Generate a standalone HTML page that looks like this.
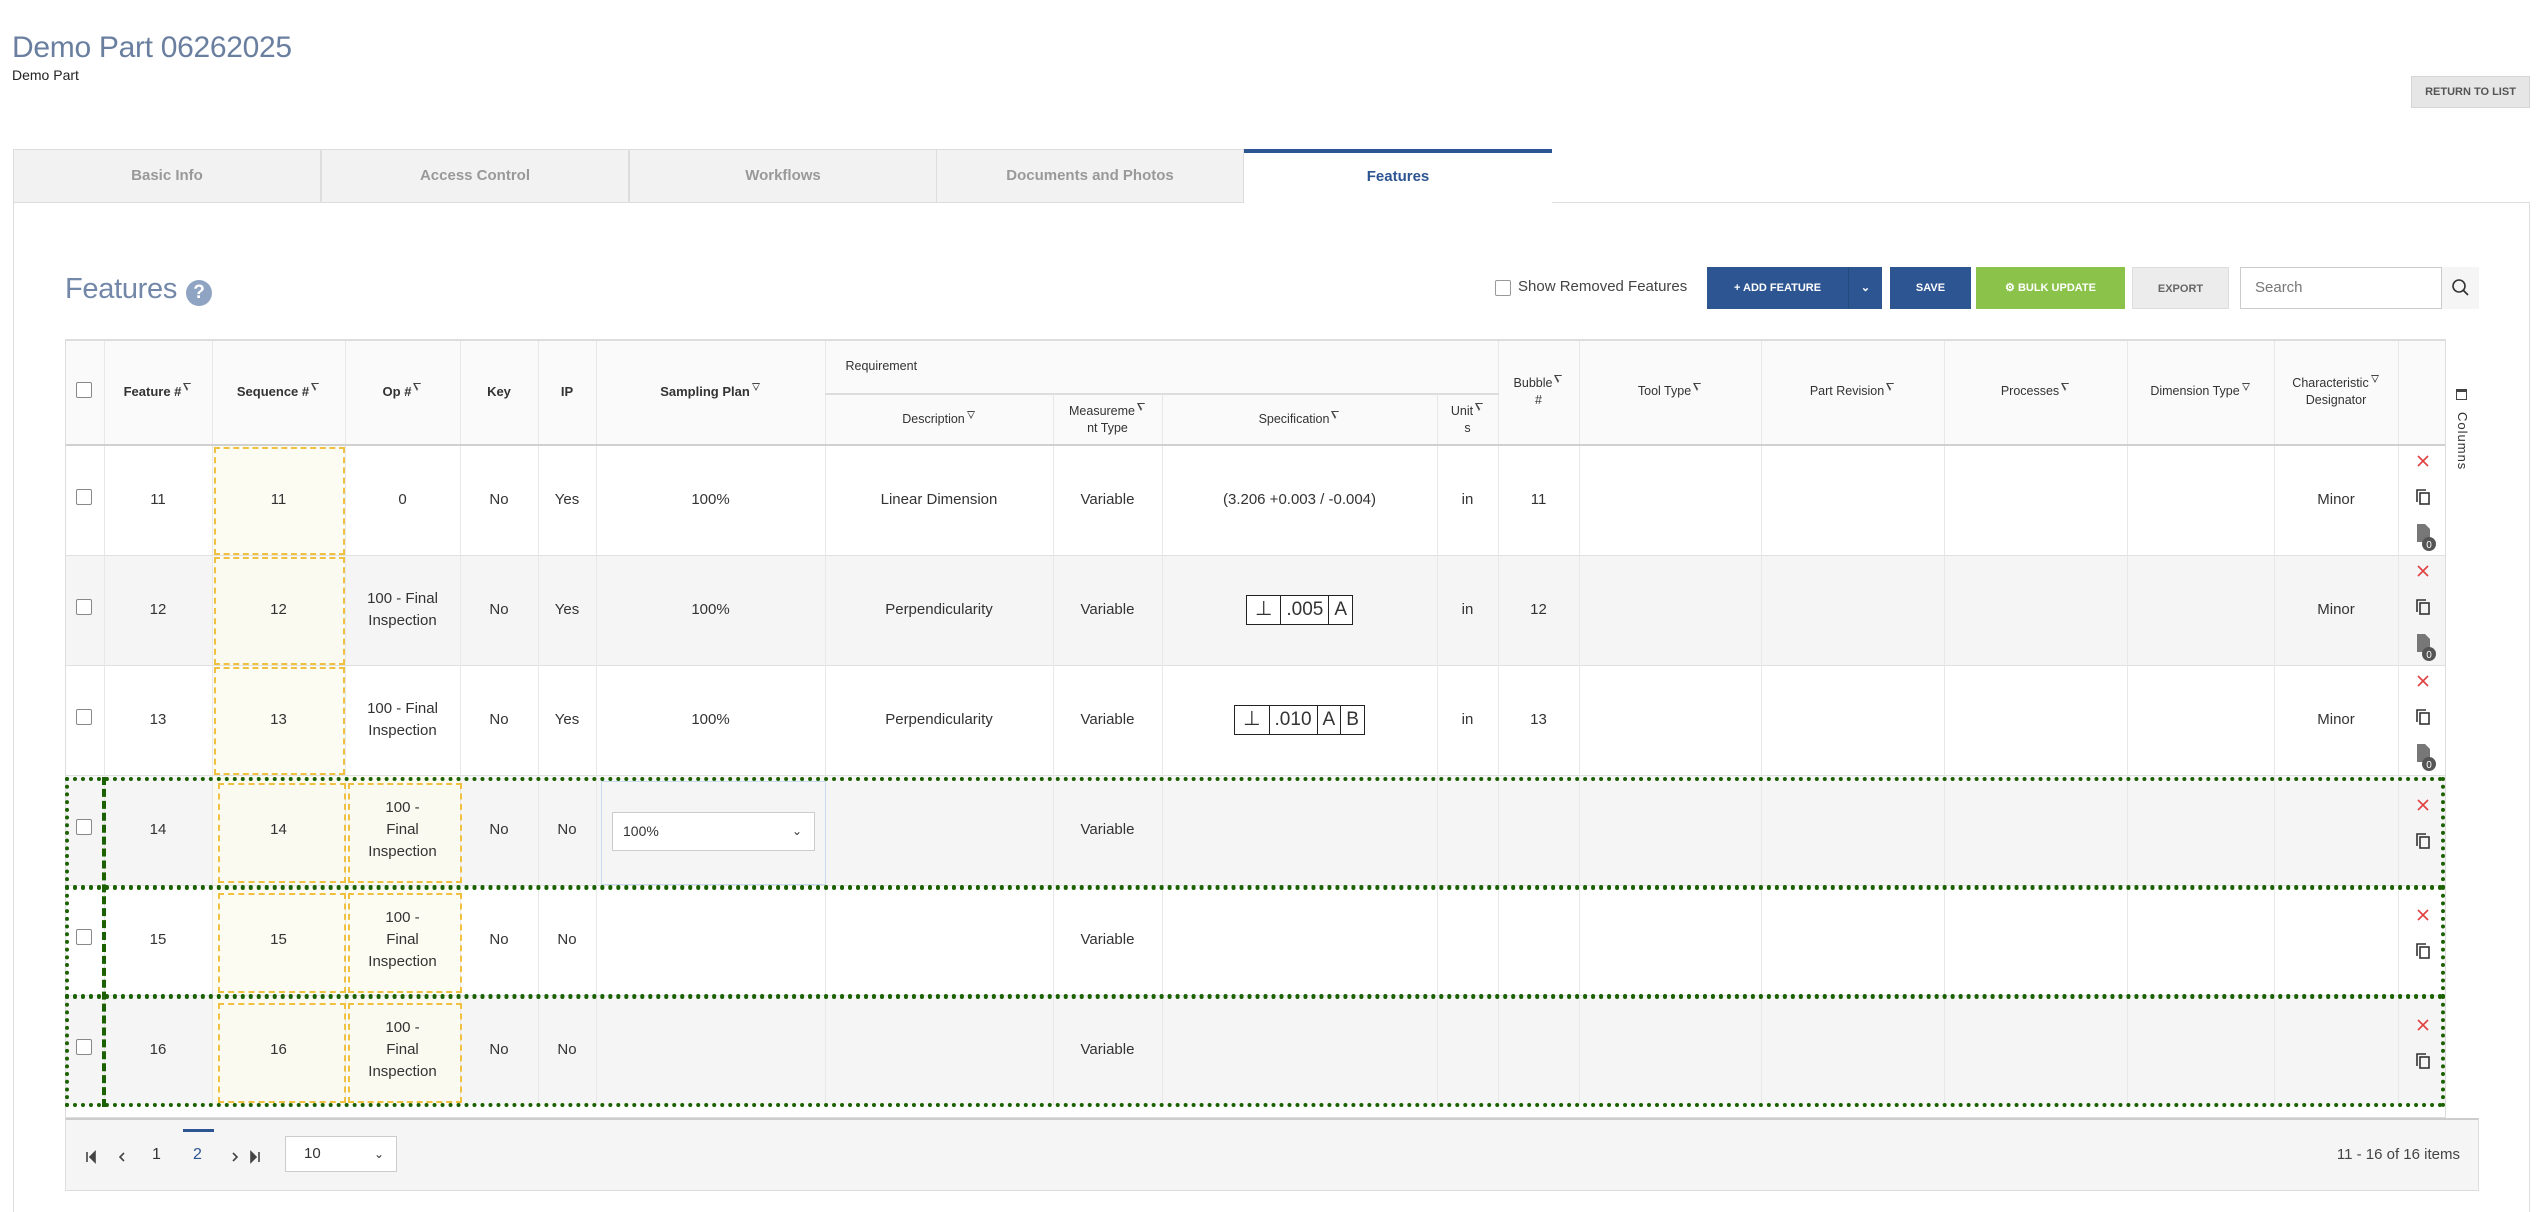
<!DOCTYPE html>
<html><head><meta charset="utf-8"><style>
*{box-sizing:border-box;margin:0;padding:0}
body{width:2540px;height:1206px;background:#fff;font-family:"Liberation Sans",Arial,sans-serif;color:#333;position:relative;overflow:hidden}
.abs{position:absolute}
.title{left:12px;top:31px;font-size:30px;color:#6a7f9f;letter-spacing:-0.3px}
.sub{left:12px;top:67px;font-size:14px;color:#222}
.ret{left:2411px;top:76px;width:119px;height:32px;background:#e6e6e6;border:1px solid #d6d6d6;font-size:11px;font-weight:bold;color:#555;text-align:center;line-height:30px}
.tab{top:149px;height:54px;width:308px;background:#f2f2f2;border:1px solid #ddd;font-size:15px;font-weight:bold;color:#999;text-align:center;line-height:52px}
.tab.act{background:#fff;border:none;border-top:4px solid #2d5591;color:#2d5591;line-height:48px}
.panel{left:13px;top:202px;width:2517px;height:1010px;border:1px solid #ddd;border-bottom:none}
.feat{left:65px;top:273px;font-size:29px;color:#7388a8;letter-spacing:-0.3px}
.help{left:186px;top:280px;width:26px;height:26px;border-radius:50%;background:#8fa3c2;color:#fff;font-weight:bold;font-size:19px;text-align:center;line-height:26px}
.btn{top:267px;height:42px;font-size:11px;font-weight:bold;color:#fff;text-align:center;line-height:42px}
table{position:absolute;left:65px;top:339px;border-collapse:collapse;table-layout:fixed;width:2380px}
th{font-size:13px;font-weight:bold;color:#333;background:#fafafa;border-left:1px solid #e8e8e8;text-align:center;vertical-align:middle;line-height:17px}
th.sub2{font-weight:normal;font-size:12.5px}
td{font-size:15px;text-align:center;vertical-align:middle;border-left:1px solid #e8e8e8;border-top:1px solid #e0e0e0;height:110px;line-height:22px}
tr.g td{background:#f5f5f5}
.f{display:inline-block;width:9px;height:10px;vertical-align:top;margin-left:2px;position:relative}
.f:before{content:"";position:absolute;left:0;top:0;border-left:4.5px solid transparent;border-right:4.5px solid transparent;border-top:8px solid #444}
.f:after{content:"";position:absolute;left:1.5px;top:1px;border-left:3px solid transparent;border-right:3px solid transparent;border-top:5px solid #fafafa}
.cb{display:inline-block;width:16px;height:16px;border:1px solid #888;border-radius:2px;background:#fff}
.fcf{display:inline-flex;border:1.5px solid #222;font-size:19px;height:30px;line-height:27px;background:#fff}
.fcf span{padding:0 5px;border-left:1.5px solid #222}
.fcf span:first-child{border-left:none;padding:0 8px;font-size:20px}
.od{position:absolute;border:2px dashed #f0c040}
.gd{position:absolute;border:4px dotted #1b6100}
.act{position:absolute}
</style></head><body>
<div class="abs title">Demo Part 06262025</div>
<div class="abs sub">Demo Part</div>
<div class="abs ret">RETURN TO LIST</div>
<div class="abs panel"></div>
<div class="abs tab" style="left:13px">Basic Info</div>
<div class="abs tab" style="left:321px">Access Control</div>
<div class="abs tab" style="left:629px">Workflows</div>
<div class="abs tab" style="left:936px">Documents and Photos</div>
<div class="abs tab act" style="left:1244px">Features</div>

<div class="abs feat">Features</div>
<div class="abs help">?</div>
<div class="abs" style="left:1495px;top:280px;width:16px;height:16px;border:1px solid #999;border-radius:2px"></div>
<div class="abs" style="left:1518px;top:278px;font-size:15px;color:#444">Show Removed Features</div>
<div class="abs btn" style="left:1707px;width:175px;background:#2d5591"><span style="position:absolute;left:0;width:141px">+ ADD FEATURE</span><span style="position:absolute;left:141px;width:34px;border-left:1px solid #244a80">&#8964;</span></div>
<div class="abs btn" style="left:1890px;width:81px;background:#2d5591">SAVE</div>
<div class="abs btn" style="left:1976px;width:149px;background:#8bc34a">&#9881; BULK UPDATE</div>
<div class="abs btn" style="left:2132px;width:97px;background:#ececec;color:#666;border:1px solid #ddd">EXPORT</div>
<div class="abs" style="left:2240px;top:267px;width:239px;height:42px;border:1px solid #ccc;background:#fff"><span style="position:absolute;left:14px;top:11px;font-size:15px;color:#777">Search</span><div style="position:absolute;left:200px;top:-1px;width:38px;height:42px;border-left:1px solid #ccc;background:#f5f5f5"><svg width="38" height="42"><circle cx="17" cy="19" r="6" fill="none" stroke="#333" stroke-width="1.6"/><line x1="21.5" y1="23.5" x2="26" y2="28" stroke="#333" stroke-width="1.8"/></svg></div></div>

<table>
<colgroup><col style="width:39px"><col style="width:108px"><col style="width:133px"><col style="width:115px"><col style="width:78px"><col style="width:58px"><col style="width:229px"><col style="width:228px"><col style="width:109px"><col style="width:275px"><col style="width:61px"><col style="width:81px"><col style="width:182px"><col style="width:183px"><col style="width:183px"><col style="width:147px"><col style="width:124px"><col style="width:47px"></colgroup>
<thead>
<tr style="height:55px">
<th rowspan="2" style="border-left:none"><span class="cb"></span></th>
<th rowspan="2">Feature #<i class="f"></i></th>
<th rowspan="2">Sequence #<i class="f"></i></th>
<th rowspan="2">Op #<i class="f"></i></th>
<th rowspan="2">Key</th>
<th rowspan="2">IP</th>
<th rowspan="2">Sampling Plan<i class="f"></i></th>
<th colspan="4" class="sub2" style="text-align:left;padding-left:20px;border-bottom:2px solid #ddd">Requirement</th>
<th rowspan="2" class="sub2">Bubble<i class="f"></i><br>#</th>
<th rowspan="2" class="sub2">Tool Type<i class="f"></i></th>
<th rowspan="2" class="sub2">Part Revision<i class="f"></i></th>
<th rowspan="2" class="sub2">Processes<i class="f"></i></th>
<th rowspan="2" class="sub2">Dimension Type<i class="f"></i></th>
<th rowspan="2" class="sub2">Characteristic<i class="f"></i><br>Designator</th>
<th rowspan="2"></th>
</tr>
<tr style="height:51px">
<th class="sub2">Description<i class="f"></i></th>
<th class="sub2">Measureme<i class="f"></i><br>nt Type</th>
<th class="sub2">Specification<i class="f"></i></th>
<th class="sub2">Unit<i class="f"></i><br>s</th>
</tr>
</thead>
<tbody style="border-top:2px solid #d0d0d0">
<tr><td style="border-left:none"><span class="cb"></span></td><td>11</td><td style="background:#fdfcf3">11</td><td>0</td><td>No</td><td>Yes</td><td>100%</td><td>Linear Dimension</td><td>Variable</td><td>(3.206 +0.003 / -0.004)</td><td>in</td><td>11</td><td></td><td></td><td></td><td></td><td>Minor</td><td></td></tr>
<tr class="g"><td style="border-left:none"><span class="cb"></span></td><td>12</td><td style="background:#fbfaf1">12</td><td>100 - Final<br>Inspection</td><td>No</td><td>Yes</td><td>100%</td><td>Perpendicularity</td><td>Variable</td><td><span class="fcf"><span>⊥</span><span>.005</span><span>A</span></span></td><td>in</td><td>12</td><td></td><td></td><td></td><td></td><td>Minor</td><td></td></tr>
<tr><td style="border-left:none"><span class="cb"></span></td><td>13</td><td style="background:#fdfcf3">13</td><td>100 - Final<br>Inspection</td><td>No</td><td>Yes</td><td>100%</td><td>Perpendicularity</td><td>Variable</td><td><span class="fcf"><span>⊥</span><span>.010</span><span>A</span><span>B</span></span></td><td>in</td><td>13</td><td></td><td></td><td></td><td></td><td>Minor</td><td></td></tr>
<tr class="g"><td style="border-left:none"><span class="cb"></span></td><td>14</td><td style="background:#fbfaf1">14</td><td style="background:#fbfaf1">100 -<br>Final<br>Inspection</td><td>No</td><td>No</td><td></td><td></td><td>Variable</td><td></td><td></td><td></td><td></td><td></td><td></td><td></td><td></td><td></td></tr>
<tr><td style="border-left:none"><span class="cb"></span></td><td>15</td><td style="background:#fdfcf3">15</td><td style="background:#fdfcf3">100 -<br>Final<br>Inspection</td><td>No</td><td>No</td><td></td><td></td><td>Variable</td><td></td><td></td><td></td><td></td><td></td><td></td><td></td><td></td><td></td></tr>
<tr class="g"><td style="border-left:none"><span class="cb"></span></td><td>16</td><td style="background:#fbfaf1">16</td><td style="background:#fbfaf1">100 -<br>Final<br>Inspection</td><td>No</td><td>No</td><td></td><td></td><td>Variable</td><td></td><td></td><td></td><td></td><td></td><td></td><td></td><td></td><td></td></tr>
</tbody></table>
<div class="abs" style="left:65px;top:339px;width:2414px;height:779px;border:1px solid #ddd;border-top:2px solid #ddd;pointer-events:none"></div>
<div class="abs" style="left:2445px;top:339px;width:34px;height:779px;border-left:1px solid #ddd;background:#fff"></div>
<div class="abs" style="left:2456px;top:389px;width:11px;height:11px;border:1.5px solid #444;border-top-width:3px"></div>
<div class="abs" style="top:412px;font-size:13px;transform:rotate(90deg);transform-origin:left top;left:2470px;color:#333;letter-spacing:1px">Columns</div>

<div class="abs" style="left:601px;top:781px;width:225px;height:104px;border:1px solid #c8dcf0"></div>
<div class="abs" style="left:612px;top:812px;width:203px;height:39px;border:1px solid #ccc;background:#fff;font-size:14px;line-height:37px;padding-left:10px">100%<span style="position:absolute;right:12px;font-size:12px">&#8964;</span></div>

<div class="od" style="left:214px;top:447px;width:131px;height:108px"></div>
<div class="od" style="left:214px;top:557px;width:131px;height:108px"></div>
<div class="od" style="left:214px;top:667px;width:131px;height:108px"></div>
<div class="od" style="left:218px;top:783px;width:128px;height:100px"></div>
<div class="od" style="left:348px;top:783px;width:114px;height:100px"></div>
<div class="od" style="left:218px;top:893px;width:128px;height:100px"></div>
<div class="od" style="left:348px;top:893px;width:114px;height:100px"></div>
<div class="od" style="left:218px;top:1003px;width:128px;height:100px"></div>
<div class="od" style="left:348px;top:1003px;width:114px;height:100px"></div>
<div class="gd" style="left:65px;top:777px;width:2380px;height:112px"></div>
<div class="gd" style="left:65px;top:886px;width:2380px;height:112px"></div>
<div class="gd" style="left:65px;top:995px;width:2380px;height:112px"></div>
<div class="abs" style="left:102px;top:777px;width:0;height:330px;border-left:4px dashed #1b6100"></div>

<svg class="act" style="left:2412px;top:450px" width="30" height="660">
<g id="a1" fill="none">
<path d="M6 6 L16 16 M16 6 L6 16" stroke="#e04040" stroke-width="1.6"/>
<rect x="8" y="43" width="9" height="11" stroke="#333" stroke-width="1.6"/><path d="M5 52 V40 H14" stroke="#333" stroke-width="1.6"/>
<path d="M5 74 H13 L18 79 V92 H5 Z" fill="#777"/><circle cx="17" cy="94" r="7" fill="#555"/><text x="17" y="98" font-size="10" fill="#fff" text-anchor="middle" font-family="Liberation Sans">0</text>
</g>
<use href="#a1" y="110"/><use href="#a1" y="220"/>
<g transform="translate(0,344)" fill="none"><path d="M6 6 L16 16 M16 6 L6 16" stroke="#e04040" stroke-width="1.6"/><rect x="8" y="43" width="9" height="11" stroke="#333" stroke-width="1.6"/><path d="M5 52 V40 H14" stroke="#333" stroke-width="1.6"/></g>
<g transform="translate(0,454)" fill="none"><path d="M6 6 L16 16 M16 6 L6 16" stroke="#e04040" stroke-width="1.6"/><rect x="8" y="43" width="9" height="11" stroke="#333" stroke-width="1.6"/><path d="M5 52 V40 H14" stroke="#333" stroke-width="1.6"/></g>
<g transform="translate(0,564)" fill="none"><path d="M6 6 L16 16 M16 6 L6 16" stroke="#e04040" stroke-width="1.6"/><rect x="8" y="43" width="9" height="11" stroke="#333" stroke-width="1.6"/><path d="M5 52 V40 H14" stroke="#333" stroke-width="1.6"/></g>
</svg>

<div class="abs" style="left:65px;top:1118px;width:2414px;height:73px;background:#f5f5f5;border:1px solid #ddd;border-top:2px solid #ccc"></div>
<svg class="abs" style="left:80px;top:1145px" width="200" height="24">
<path d="M7 7 V17 M15 7 L10 12 L15 17 Z" stroke="#444" stroke-width="1.6" fill="#444"/>
<path d="M44 8 L40 12 L44 16" stroke="#444" stroke-width="1.6" fill="none"/>
<path d="M153 8 L157 12 L153 16" stroke="#444" stroke-width="1.6" fill="none"/>
<path d="M171 7 L176 12 L171 17 Z M179 7 V17" stroke="#444" stroke-width="1.6" fill="#444"/>
</svg>
<div class="abs" style="left:152px;top:1146px;font-size:16px">1</div>
<div class="abs" style="left:183px;top:1129px;width:31px;height:3px;background:#2d5591"></div>
<div class="abs" style="left:193px;top:1146px;font-size:16px;color:#2d5591">2</div>
<div class="abs" style="left:285px;top:1136px;width:112px;height:36px;background:#fff;border:1px solid #ccc;font-size:15px;line-height:34px;padding-left:18px">10<span style="position:absolute;right:12px;font-size:12px">&#8964;</span></div>
<div class="abs" style="left:2200px;top:1146px;width:260px;text-align:right;font-size:15px;color:#444">11 - 16 of 16 items</div>
</body></html>
